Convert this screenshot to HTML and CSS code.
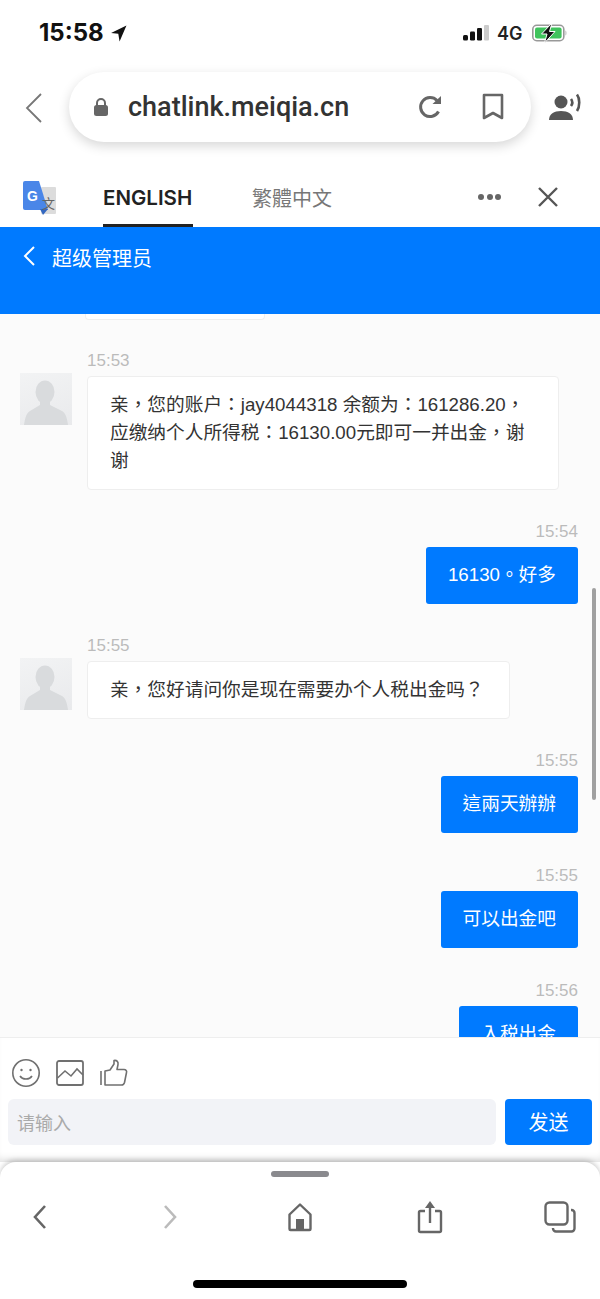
FILE: index.html
```html
<!DOCTYPE html>
<html lang="en">
<head>
    <meta charset="UTF-8">
    <meta name="viewport" content="width=device-width, initial-scale=1.0">
    <title>chatlink.meiqia.cn</title>
    <link rel="stylesheet" href="styles.css">
</head>
<body>
    <div class="phone">
        <div class="status">
            <div class="clock">15:58
                <svg class="arrow" width="17" height="17" viewBox="0 0 16 16"><path d="M15.500 .5 1 7.500l6.800.8L9 15.500z" fill="#111"/></svg>
            </div>
            <div class="status-right">
                <svg width="26" height="16" viewBox="0 0 26 16"><rect x="0" y="10" width="5" height="5.500" rx="1.500" fill="#111"/><rect x="7" y="6.500" width="5" height="9" rx="1.200" fill="#111"/><rect x="14" y="3" width="5" height="12.500" rx="1.200" fill="#111"/><rect x="21" y="0" width="5" height="15.500" rx="1" fill="#ccc"/></svg>
                <span class="net">4G</span>
                <svg width="36" height="20" viewBox="0 0 36 20"><rect x="0.800" y="2.300" width="31" height="15.400" rx="4" fill="none" stroke="#999" stroke-width="1.600"/><rect x="3" y="4.500" width="26.600" height="11" rx="2" fill="#3fc35c"/><path d="M33.500 7.500c1.200.4 1.200 4.600 0 5z" fill="#aaa"/><path d="M20 0 9.500 11H15l-2.500 9L23 8.500h-5.500z" fill="#111" stroke="#fff" stroke-width="1"/></svg>
            </div>
        </div>

        <div class="browser">
            <svg class="icon-back" width="20" height="32" viewBox="0 0 20 32"><path d="M17 2 3 16l14 14" fill="none" stroke="#777" stroke-width="1.800"/></svg>
            <div class="urlbar">
                <svg width="16" height="20" viewBox="0 0 16 20"><path d="M4 9V6a4 4 0 0 1 8 0v3" fill="none" stroke="#666" stroke-width="2"/><rect x="1" y="8" width="14" height="11" rx="2.500" fill="#666"/></svg>
                <span class="url">chatlink.meiqia.cn</span>
                <svg class="reload" width="26" height="26" viewBox="0 0 26 26"><path d="M20.500 17.500A9.500 9.500 0 1 1 19 6.500" fill="none" stroke="#666" stroke-width="3"/><path d="M14.500 10H23V2z" fill="#666"/></svg>
                <svg class="bookmark" width="22" height="28" viewBox="0 0 22 28"><path d="M2 2h18v23l-9-5-9 5z" fill="none" stroke="#666" stroke-width="2.600" stroke-linejoin="round"/></svg>
            </div>
            <svg class="speaker" width="36" height="30" viewBox="0 0 36 30"><circle cx="13" cy="10" r="6.500" fill="#555"/><path d="M1 28c0-6 5-9 12-9s12 3 12 9z" fill="#555"/><path d="M23 7c1.500 2 1.500 5 0 7M29 2.500c3 4 3 12 0 16.500" fill="none" stroke="#555" stroke-width="2.600"/></svg>
        </div>

        <div class="translate">
            <svg class="g-logo" width="36" height="36" viewBox="0 0 36 36">
                <rect x="19" y="7" width="15" height="27" rx="1" fill="#dcdcdc"/>
                <path d="M3 1h14l9 29H3a2 2 0 0 1-2-2V3a2 2 0 0 1 2-2z" fill="#4a86e8"/>
                <path d="M18 29h8l-5 6z" fill="#3468c0"/>
                <text x="5" y="21" class="g-letter">G</text>
                <text x="20" y="28" class="g-wen">文</text>
            </svg>
            <div class="tab tab-active">ENGLISH</div>
            <div class="tab tab-zh">繁體中文</div>
            <div class="dots"><i></i><i></i><i></i></div>
            <svg class="close" width="22" height="22" viewBox="0 0 22 22"><path d="M2 2l18 18M20 2 2 20" stroke="#555" stroke-width="2.400"/></svg>
        </div>

        <div class="chat-head">
            <svg width="14" height="22" viewBox="0 0 14 22"><path d="M12 2 3 11l9 9" fill="none" stroke="#fff" stroke-width="2"/></svg>
            <span>超级管理员</span>
        </div>

        <div class="chat">
            <div class="stub"></div>

            <div class="msg msg-first">
                <div class="time">15:53</div>
                <div class="row">
                    <div class="avatar"><svg width="52" height="52" viewBox="0 0 52 52"><ellipse cx="25" cy="19" rx="9.500" ry="11.500" fill="#d9dbdd"/><path d="M20 27h10v5l12 6c3 1.500 5 6 6 14H4c1-8 3-12.500 6-14l10-6z" fill="#d9dbdd"/></svg></div>
                    <div class="bubble bubble-long">亲，您的账户：jay4044318 余额为：161286.20，应缴纳个人所得税：16130.00元即可一并出金，谢谢</div>
                </div>
            </div>

            <div class="msg msg-me mt-a">
                <div class="time">15:54</div>
                <div class="bubble-me">16130。好多</div>
            </div>

            <div class="msg mt-a">
                <div class="time">15:55</div>
                <div class="row">
                    <div class="avatar"><svg width="52" height="52" viewBox="0 0 52 52"><ellipse cx="25" cy="19" rx="9.500" ry="11.500" fill="#d9dbdd"/><path d="M20 27h10v5l12 6c3 1.500 5 6 6 14H4c1-8 3-12.500 6-14l10-6z" fill="#d9dbdd"/></svg></div>
                    <div class="bubble">亲，您好请问你是现在需要办个人税出金吗？</div>
                </div>
            </div>

            <div class="msg msg-me mt-a">
                <div class="time">15:55</div>
                <div class="bubble-me">這兩天辦辦</div>
            </div>

            <div class="msg msg-me mt-b">
                <div class="time">15:55</div>
                <div class="bubble-me">可以出金吧</div>
            </div>

            <div class="msg msg-me mt-b">
                <div class="time">15:56</div>
                <div class="bubble-me">入税出金</div>
            </div>

            <div class="scrollbar"></div>
        </div>

        <div class="composer">
            <div class="tools">
                <svg width="30" height="30" viewBox="0 0 30 30"><circle cx="15" cy="15" r="13.200" fill="none" stroke="#707070" stroke-width="1.600"/><circle cx="10.500" cy="12" r="1.200" fill="#707070"/><circle cx="19.500" cy="12" r="1.200" fill="#707070"/><path d="M9 18c2.500 4 9.500 4 12 0" fill="none" stroke="#707070" stroke-width="1.600"/></svg>
                <svg width="30" height="28" viewBox="0 0 30 28"><rect x="2" y="2" width="26" height="24" rx="2" fill="none" stroke="#707070" stroke-width="1.800"/><path d="M2.500 19 10 12l6 5 6-7 6 6" fill="none" stroke="#707070" stroke-width="1.600"/></svg>
                <svg width="30" height="30" viewBox="0 0 30 30"><path d="M2 13v14" stroke="#707070" stroke-width="1.600"/><path d="M6 13l5-1 4-6V2.500c3-.5 4.500 1.500 4 4l-1 5h7c2 0 3 1.500 2.500 3l-2 10c-.4 1.500-1.500 2.500-3 2.500H6z" fill="none" stroke="#707070" stroke-width="1.600" stroke-linejoin="round"/></svg>
            </div>
            <div class="input-row">
                <div class="input">请输入</div>
                <div class="send">发送</div>
            </div>
        </div>

        <div class="sheet">
            <div class="grabber"></div>
            <div class="nav">
                <svg width="18" height="28" viewBox="0 0 18 28"><path d="M14 3 4 14l10 11" fill="none" stroke="#666" stroke-width="2.600"/></svg>
                <svg width="18" height="28" viewBox="0 0 18 28"><path d="M4 3l10 11L4 25" fill="none" stroke="#bbb" stroke-width="2.600"/></svg>
                <svg width="26" height="30" viewBox="0 0 26 30"><path d="M13 2.500 2.500 12.500V27a1 1 0 0 0 1 1h19a1 1 0 0 0 1-1V12.500z" fill="none" stroke="#666" stroke-width="2.400" stroke-linejoin="round"/><rect x="9" y="17" width="8" height="11" fill="#666"/></svg>
                <svg width="26" height="34" viewBox="0 0 26 34"><path d="M8 11H3.500A1.500 1.500 0 0 0 2 12.500v18A1.500 1.500 0 0 0 3.500 32h19a1.500 1.500 0 0 0 1.500-1.500v-18a1.500 1.500 0 0 0-1.500-1.500H18" fill="none" stroke="#666" stroke-width="2.400"/><path d="M13 23V4" stroke="#666" stroke-width="2.400"/><path d="M8 8l5-7 5 7z" fill="#666"/></svg>
                <svg width="32" height="32" viewBox="0 0 32 32"><rect x="1.500" y="1.500" width="22" height="22" rx="4" fill="none" stroke="#666" stroke-width="2.400"/><path d="M27 9h.5a3 3 0 0 1 3 3v15.500a3 3 0 0 1-3 3H12a3 3 0 0 1-3-3V27" fill="none" stroke="#666" stroke-width="2.400"/></svg>
            </div>
            <div class="home-bar"></div>
        </div>
    </div>
</body>
</html>
```
FILE: styles.css
```css
* { box-sizing: border-box; }
html, body { margin: 0; padding: 0; }
body { font-family: "Liberation Sans", "Noto Sans CJK TC", sans-serif; background: #fff; }
svg { display: block; flex: none; }

.phone { width: 600px; height: 1299px; display: flex; flex-direction: column; overflow: hidden; }

/* status bar */
.status { height: 72px; padding: 20px 32px 0 39px; display: flex; justify-content: space-between; align-items: flex-start; }
.clock { display: flex; align-items: center; gap: 6px; font-family: Inter, sans-serif; font-size: 24px; font-weight: 700; color: #111; line-height: 26px; }
.status-right { display: flex; align-items: center; gap: 8px; height: 26px; }
.net { width: 27px; font-family: Inter, sans-serif; font-size: 18px; font-weight: 600; color: #222; }

/* browser bar */
.browser { height: 98px; padding: 0 15px 0 24px; display: flex; align-items: flex-start; }
.icon-back { margin-top: 20px; }
.urlbar { width: 462px; height: 70px; margin-left: 25px; padding: 0 27px 0 24px; background: #fff; border-radius: 35px; box-shadow: 0 4px 12px rgba(0, 0, 0, .16); display: flex; align-items: center; }
.url { margin-left: 19px; font-family: Roboto, sans-serif; font-size: 27px; font-weight: 500; color: #333; white-space: nowrap; }
.reload { margin-left: auto; }
.bookmark { margin-left: 38px; }
.speaker { margin: 20px 0 0 17px; }

/* translate bar */
.translate { height: 57px; padding-left: 22px; display: flex; align-items: flex-start; }
.g-logo { margin-top: 10px; }
.g-letter { font-family: "Liberation Sans", sans-serif; font-size: 14px; font-weight: 700; fill: #fff; }
.g-wen { font-family: "Noto Sans CJK SC", sans-serif; font-size: 13px; fill: #666; }
.tab { height: 57px; padding-top: 15px; line-height: 26px; font-size: 20px; }
.tab-active { margin-left: 45px; width: 90px; font-family: Inter, sans-serif; font-weight: 600; font-size: 20.500px; color: #222; border-bottom: 3px solid #222; white-space: nowrap; }
.tab-zh { margin-left: 59px; color: #777; font-family: "Noto Sans CJK TC", sans-serif; font-size: 20px; }
.dots { margin: 24px 0 0 146px; display: flex; gap: 2.500px; }
.dots i { width: 6px; height: 6px; border-radius: 50%; background: #666; }
.close { margin: 16px 0 0 36px; }

/* blue header */
.chat-head { height: 87px; padding: 18px 0 0 22px; background: #007aff; color: #fff; display: flex; align-items: flex-start; gap: 16px; font-family: "Noto Sans CJK SC", sans-serif; font-size: 20px; line-height: 26px; }

/* messages */
.chat { position: relative; height: 723px; overflow: hidden; background: #fbfbfb; }
.stub { width: 180px; height: 6px; margin-left: 85px; background: #fff; border: 1px solid #efefef; border-top: 0; border-radius: 0 0 4px 4px; }
.msg-first { margin-top: 32px; }
.mt-a { margin-top: 33px; }
.mt-b { margin-top: 34px; }
.time { height: 18px; line-height: 18px; font-size: 17px; color: #bbb; padding-left: 87px; }
.msg-me { display: flex; flex-direction: column; align-items: flex-end; padding-right: 22px; }
.msg-me .time { padding: 0; }
.row { display: flex; align-items: flex-start; gap: 15px; margin-top: 3px; padding-left: 20px; }
.avatar { width: 52px; height: 52px; background: linear-gradient(160deg, #f2f3f4, #e9eaec); flex: none; }
.bubble { margin-top: 3px; padding: 14px 23px 14px 22px; background: #fff; border: 1px solid #eee; border-radius: 4px; font-size: 18.700px; line-height: 28px; color: #333; width: 423px; }
.bubble-long { width: 472px; }
.bubble-me { margin-top: 6px; padding: 14px 22px 15px; background: #007aff; color: #fff; border-radius: 3px; font-size: 18.700px; line-height: 28px; white-space: nowrap; }
.scrollbar { position: absolute; top: 274px; right: 4px; width: 4px; height: 212px; border-radius: 2px; background: #a0a0a0; }

/* composer */
.composer { height: 125px; padding: 20px 8px 0; background: #fff; border-top: 1px solid #eee; box-shadow: inset 0 -8px 8px -6px rgba(0, 0, 0, .14); }
.tools { display: flex; align-items: center; gap: 14px; padding-left: 3px; height: 30px; }
.input-row { margin-top: 11px; display: flex; gap: 9px; height: 46px; }
.input { width: 488px; padding-left: 9px; background: #f2f3f7; border-radius: 6px; font-family: "Noto Sans CJK SC", sans-serif; font-size: 18px; line-height: 46px; color: #aaa; }
.send { width: 87px; background: #007aff; border-radius: 4px; color: #fff; text-align: center; font-family: "Noto Sans CJK SC", sans-serif; font-size: 20px; line-height: 46px; }

/* bottom sheet */
.sheet { height: 137px; background: #fff; border-radius: 16px 16px 0 0; box-shadow: 0 -2px 5px rgba(0, 0, 0, .2); }
.grabber { width: 58px; height: 6px; margin: 9px auto 0; border-radius: 3px; background: #8a8a8e; }
.nav { margin-top: 21px; padding-left: 19px; display: grid; grid-template-columns: repeat(5, 42px); column-gap: 88px; justify-items: center; align-items: center; height: 38px; }
.home-bar { width: 214px; height: 8px; margin: 44px auto 0; border-radius: 4px; background: #000; }
```
